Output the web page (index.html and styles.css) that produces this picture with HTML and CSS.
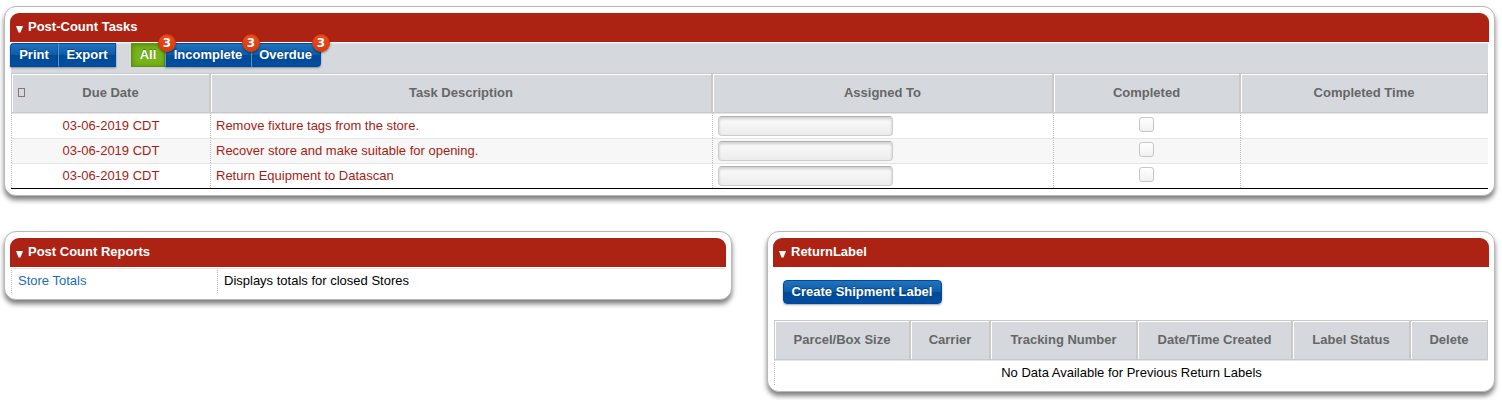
FILE: index.html
```html
<!DOCTYPE html>
<html lang="en">
<head>
    <meta charset="UTF-8">
    <title>Post-Count Tasks</title>
    <link rel="stylesheet" href="styles.css">
</head>
<body>
    <div class="panel">
        <div class="panel-header"><svg class="arrow" width="7" height="8" viewBox="0 0 7 8"><path d="M0 1h7L4.5 7.5h-2z"/></svg>Post-Count Tasks</div>
        <div class="toolbar">
            <div class="btn-group">
                <button class="btn print">Print</button>
                <button class="btn export">Export</button>
            </div>
            <div class="btn-group filters">
                <button class="btn all active">All<span class="badge">3</span></button>
                <button class="btn incomplete">Incomplete<span class="badge">3</span></button>
                <button class="btn overdue">Overdue<span class="badge">3</span></button>
            </div>
        </div>
        <table class="grid tasks">
            <colgroup>
                <col class="col-due"><col class="col-desc"><col class="col-assigned"><col class="col-completed"><col>
            </colgroup>
            <thead>
                <tr>
                    <th><div class="due-head"><span class="sort"></span>Due Date</div></th>
                    <th>Task Description</th>
                    <th>Assigned To</th>
                    <th>Completed</th>
                    <th>Completed Time</th>
                </tr>
            </thead>
            <tbody>
                <tr>
                    <td class="center">03-06-2019 CDT</td>
                    <td>Remove fixture tags from the store.</td>
                    <td><input type="text"></td>
                    <td class="center"><input type="checkbox"></td>
                    <td></td>
                </tr>
                <tr class="odd">
                    <td class="center">03-06-2019 CDT</td>
                    <td>Recover store and make suitable for opening.</td>
                    <td><input type="text"></td>
                    <td class="center"><input type="checkbox"></td>
                    <td></td>
                </tr>
                <tr>
                    <td class="center">03-06-2019 CDT</td>
                    <td>Return Equipment to Datascan</td>
                    <td><input type="text"></td>
                    <td class="center"><input type="checkbox"></td>
                    <td></td>
                </tr>
            </tbody>
        </table>
    </div>

    <div class="row">
        <div class="panel reports">
            <div class="panel-header"><svg class="arrow" width="7" height="8" viewBox="0 0 7 8"><path d="M0 1h7L4.5 7.5h-2z"/></svg>Post Count Reports</div>
            <table class="grid report-list">
                <colgroup><col class="col-report"><col></colgroup>
                <tbody>
                    <tr>
                        <td><a href="#">Store Totals</a></td>
                        <td>Displays totals for closed Stores</td>
                    </tr>
                </tbody>
            </table>
        </div>

        <div class="panel labels">
            <div class="panel-header"><svg class="arrow" width="7" height="8" viewBox="0 0 7 8"><path d="M0 1h7L4.5 7.5h-2z"/></svg>ReturnLabel</div>
            <div class="actions">
                <button class="btn create">Create Shipment Label</button>
            </div>
            <table class="grid label-list">
                <colgroup>
                    <col class="col-size"><col class="col-carrier"><col class="col-tracking"><col class="col-created"><col class="col-status"><col>
                </colgroup>
                <thead>
                    <tr>
                        <th>Parcel/Box Size</th>
                        <th>Carrier</th>
                        <th>Tracking Number</th>
                        <th>Date/Time Created</th>
                        <th>Label Status</th>
                        <th>Delete</th>
                    </tr>
                </thead>
                <tbody>
                    <tr>
                        <td class="center" colspan="6">No Data Available for Previous Return Labels</td>
                    </tr>
                </tbody>
            </table>
        </div>
    </div>
</body>
</html>
```
FILE: styles.css
```css
* {
    box-sizing: border-box;
}

body {
    min-height: 400px;
    margin: 0;
    padding: 6px 7px 0 4px;
    background: #fff;
    font-family: Arial, "Liberation Sans", sans-serif;
    font-size: 13px;
    color: #000;
}

.panel {
    border: 1px solid #b8b8b8;
    border-radius: 12px;
    padding: 6px 5px;
    background: #fff;
    box-shadow: 0 4px 5px rgba(0, 0, 0, 0.5);
}

.panel-header {
    height: 29px;
    line-height: 28px;
    padding-left: 6px;
    border-radius: 9px 9px 0 0;
    background: #ac2314;
    color: #fff;
    font-weight: bold;
}

.arrow {
    margin-right: 5px;
    vertical-align: -2px;
    fill: #fff;
}

.row {
    display: flex;
    justify-content: space-between;
    align-items: flex-start;
    margin-top: 35px;
}

.reports,
.labels {
    width: 728px;
}

/* toolbar */
.toolbar {
    display: flex;
    height: 30px;
    margin: 1px 1px 0;
    background: #d5d9de;
    border-top: 1px solid #e5e5e5;
}

.btn-group {
    display: flex;
    height: 24px;
    margin: -1px 0 0 -1px;
}

.filters {
    margin-left: 15px;
}

.btn {
    position: relative;
    height: 24px;
    padding: 0 0 1px;
    border: 1px solid #00489b;
    border-left-color: #5d93ce;
    border-right-width: 0;
    background: linear-gradient(#2173bd 0%, #0c5cac 48%, #004a93 52%, #004da3 100%);
    box-shadow: 0 1px 2px rgba(0, 0, 0, 0.35);
    color: #fff;
    font-family: inherit;
    font-size: 13px;
    font-weight: bold;
    line-height: 20px;
    text-shadow: 0 -1px 1px rgba(0, 0, 0, 0.35);
    white-space: nowrap;
}

.print {
    width: 48px;
    padding-right: 1px;
    border-left-color: #00489b;
    border-radius: 4px 0 0 0;
}

.export {
    width: 58px;
    border-right-width: 1px;
}

.all {
    width: 34px;
    padding-right: 1px;
}

.incomplete {
    width: 86px;
    padding-right: 1px;
}

.overdue {
    width: 70px;
    padding-right: 1px;
    border-right-width: 1px;
    border-radius: 0 0 4px 0;
}

.active {
    border-color: #5f9413;
    background: #76b517;
    box-shadow: inset 0 1px 5px rgba(0, 0, 0, 0.3);
}

.badge {
    position: absolute;
    top: -10px;
    right: -11px;
    z-index: 1;
    width: 18px;
    height: 18px;
    border: 1px solid #d9350a;
    border-radius: 50%;
    background: linear-gradient(#ea4b1f, #d63c0e);
    box-shadow: 0 1px 2px rgba(0, 0, 0, 0.5);
    font-family: "DejaVu Sans", sans-serif;
    font-size: 12px;
    line-height: 16px;
    text-align: center;
    text-shadow: none;
}

.incomplete .badge {
    right: -9px;
}

.overdue .badge {
    right: -10px;
}

/* tables */
.grid {
    width: calc(100% - 2px);
    margin: 0 1px;
    border-collapse: separate;
    border-spacing: 0;
    table-layout: fixed;
}

.grid th {
    height: 40px;
    padding: 0 0 1px;
    border: 1px solid #c9c9c9;
    background: #d5d9de;
    box-shadow: inset 1px 1px 0 #fff;
    color: #666;
}

.grid td {
    height: 25px;
    padding: 0 5px;
    border-top: 1px solid #e5e5e5;
    border-left: 1px dotted #bbb;
    line-height: 24px;
}

.grid .center {
    text-align: center;
}

.tasks {
    border-bottom: 1px solid #000;
}

.tasks td {
    color: #a61c14;
}

.tasks .odd td {
    background: #f7f7f7;
}

.col-due {
    width: 199px;
}

.col-desc {
    width: 502px;
}

.col-assigned {
    width: 341px;
}

.col-completed {
    width: 187px;
}

.due-head {
    position: relative;
}

/* empty box in front of the sorted column */
.sort {
    position: absolute;
    left: 6px;
    top: 3px;
    width: 7px;
    height: 9px;
    border: 1px solid #8a7373;
}

input[type="text"] {
    display: block;
    width: 175px;
    height: 20px;
    border: 1px solid #cdcdcd;
    border-top-color: #b0b0b0;
    border-radius: 4px;
    background: linear-gradient(#fcfcfc, #ececec);
    box-shadow: inset 0 2px 3px rgba(0, 0, 0, 0.18);
}

input[type="checkbox"] {
    appearance: none;
    display: block;
    width: 15px;
    height: 15px;
    margin: 0 auto 3px 80px;
    border: 1px solid #c6c6c6;
    border-radius: 3px;
    background: linear-gradient(#fff, #f1f1f1);
}

/* reports */
.report-list {
    margin-top: 1px;
}

.col-report {
    width: 206px;
}

.report-list td {
    padding-left: 6px;
    padding-bottom: 1px;
    line-height: 23px;
}

a {
    color: #1c6cb5;
    text-decoration: none;
}

/* return labels */
.actions {
    padding: 13px 10px 16px;
    display: flex;
}

.create {
    width: 159px;
    border-color: #00489b;
    border-right-width: 1px;
    border-radius: 4px;
    padding-right: 1px;
}

.col-size {
    width: 136px;
}

.col-carrier {
    width: 80px;
}

.col-tracking {
    width: 147px;
}

.col-created {
    width: 155px;
}

.col-status {
    width: 118px;
}
```
